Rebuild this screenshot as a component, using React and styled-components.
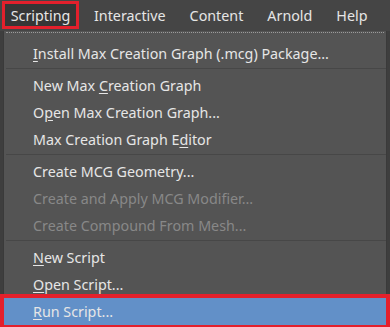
import React from "react";
import styled, { createGlobalStyle } from "styled-components";

const menuTitles = ["Scripting", "Interactive", "Content", "Arnold", "Help"];

// each entry: [before, accel, after] or "sep"
const items = [
  { parts: ["", "I", "nstall Max Creation Graph (.mcg) Package..."] },
  "sep",
  { parts: ["New Max ", "C", "reation Graph"] },
  { parts: ["O", "p", "en Max Creation Graph..."] },
  { parts: ["Max Creation Graph E", "d", "itor"] },
  "sep",
  { parts: ["Create MCG Geometry...", "", ""] },
  { parts: ["Create and Apply MCG Modifier...", "", ""], disabled: true },
  { parts: ["Create Compound From Mesh...", "", ""], disabled: true },
  "sep",
  { parts: ["", "N", "ew Script"] },
  { parts: ["", "O", "pen Script..."] },
  { parts: ["", "R", "un Script..."], active: true },
];

const App = () => {
  return (
    <>
      <GlobalStyle />
      <Screen>
        <MenuBar>
          {menuTitles.map((t, i) => (
            <MenuTitle key={t} $open={i === 0}>
              {t}
            </MenuTitle>
          ))}
        </MenuBar>
        <Dropdown>
          <DottedRule />
          <List>
            {items.map((it, i) =>
              it === "sep" ? (
                <Separator key={i} />
              ) : (
                <Item key={i} $disabled={it.disabled} $active={it.active}>
                  {it.parts[0]}
                  {it.parts[1] && <Accel>{it.parts[1]}</Accel>}
                  {it.parts[2]}
                </Item>
              )
            )}
          </List>
        </Dropdown>
      </Screen>
    </>
  );
};

// ===== Styled Components =====

const GlobalStyle = createGlobalStyle`
  html, body {
    margin: 0;
    padding: 0;
    background: #3e3e3e;
  }
  body {
    font-family: "Noto Sans", "Open Sans", sans-serif;
  }
`;

const Screen = styled.div`
  width: 390px;
  height: 327px;
  overflow: hidden;
  background: #3e3e3e;
  position: relative;
`;

const MenuBar = styled.div`
  display: flex;
  align-items: center;
  height: 31px;
  padding-left: 2px;
  background: #454545;
`;

const MenuTitle = styled.div`
  display: flex;
  align-items: center;
  justify-content: center;
  box-sizing: border-box;
  height: 28px;
  margin-top: -1px;
  padding: 0 12px;
  font-size: 14.3px;
  color: #e6e6e6;
  background: ${(p) => (p.$open ? "#363636" : "transparent")};
  border: ${(p) => (p.$open ? "3px solid #e3202c" : "none")};
  ${(p) => p.$open && "width: 77px; padding: 0; margin-right: 3px;"}
`;

const Dropdown = styled.div`
  margin-left: 3px;
  width: 384px;
  box-sizing: border-box;
  height: 300px;
  background: #545454;
  border-left: 1px solid #3a3a3a;
  border-right: 1px solid #3a3a3a;
  padding-top: 1px;
`;

const DottedRule = styled.div`
  margin: 0 2px;
  border-top: 1px dotted #9a9a9a;
`;

const List = styled.div`
  display: flex;
  flex-direction: column;
  padding-top: 7px;
`;

const Item = styled.div`
  display: flex;
  align-items: center;
  height: 27px;
  padding-left: 29px;
  font-size: 14.3px;
  white-space: pre;
  color: ${(p) => (p.$disabled ? "#888888" : "#e6e6e6")};
  background: ${(p) => (p.$active ? "#6290c8" : "transparent")};
  outline: ${(p) => (p.$active ? "4px solid #e3202c" : "none")};
`;

const Accel = styled.span`
  text-decoration: underline;
  text-underline-offset: 2px;
`;

const Separator = styled.div`
  height: 5px;
  box-sizing: border-box;
  border-top: 1px solid #474747;
  margin: 0 0 0 2px;
  position: relative;
  top: 1px;
`;

export default App;
